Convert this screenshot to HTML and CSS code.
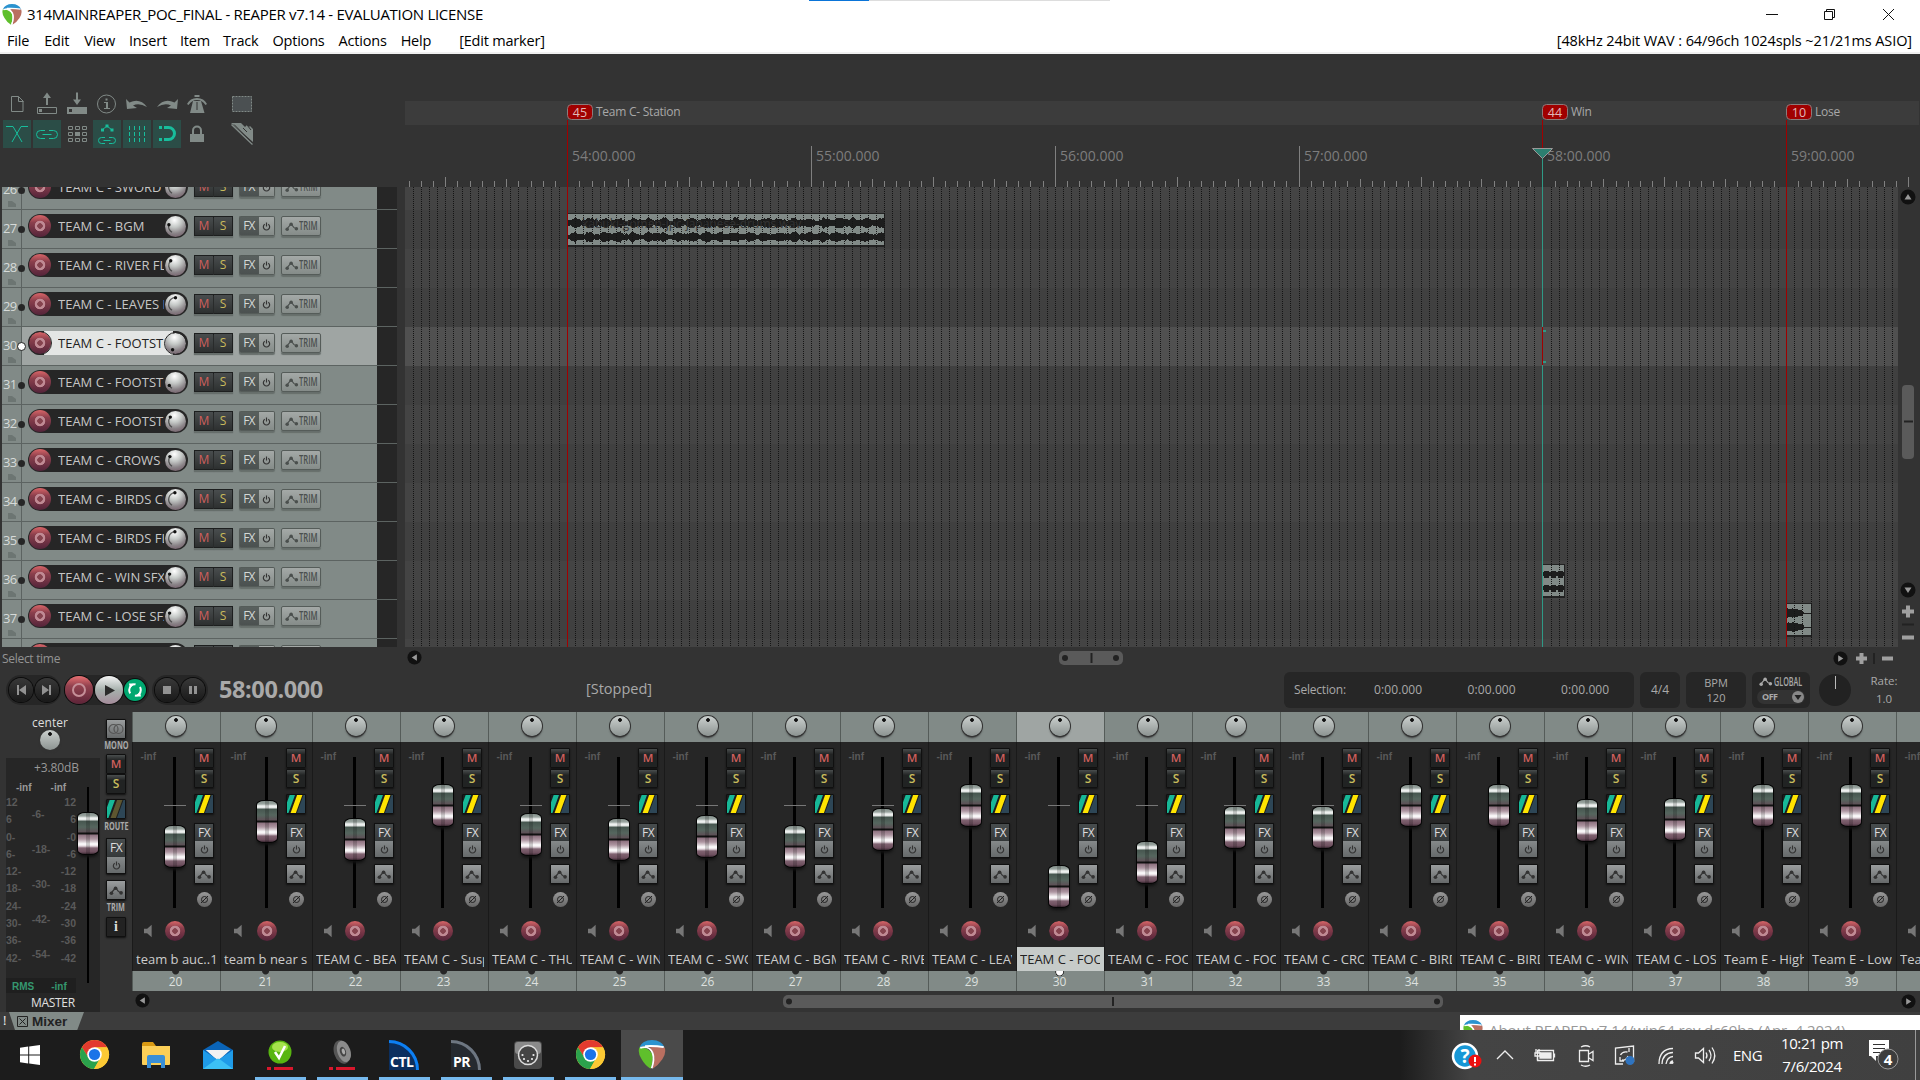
FILE: index.html
```html
<!DOCTYPE html>
<html lang="en">
<head>
<meta charset="utf-8">
<title>314MAINREAPER_POC_FINAL - REAPER</title>
<link rel="stylesheet" href="styles.css">
</head>
<body>
<svg class="defs" width="0" height="0">
  <defs>
    <symbol id="reaper" viewBox="0 0 20 21"><path d="M.8 5.500Q3 0 10 0T19.200 5.500L12 6.500Q6 3 .8 5.500Z" fill="#2b93cf"/><path d="M.8 5.500Q-.5 9.500 2.500 14Q5 18.500 9 20.800Q11.500 14 10 10Q7 5 .8 5.500Z" fill="#5fbf2c"/><path d="M19.200 5.500Q20.500 9.500 17.500 14Q14.500 18.500 10.500 20.800Q12.500 13 11 9Q9.500 6.500 8 5.500Q14 4 19.200 5.500Z" fill="#b96f60"/><path d="M1.500 5.700Q8 3.700 10.500 9.500Q12 14 9.800 20.500M5 4.500Q12 4 18.500 5.200" fill="none" stroke="#fff" stroke-width="1.300"/></symbol>
    <symbol id="chrome" viewBox="0 0 32 32"><circle cx="16" cy="16" r="15" fill="#fc3"/><path d="M3 8.500A15 15 0 0 1 29 8.500L16 9 9.500 19Z" fill="#e33b2e"/><path d="M3 8.500A15 15 0 0 0 15.500 31L22 19.500H10Z" fill="#2ba24c"/><path d="M29 8.500H16L22 19.500 15.500 31A15 15 0 0 0 29 8.500Z" fill="#fcc934"/><circle cx="16" cy="16" r="7.500" fill="#fff"/><circle cx="16" cy="16" r="5.800" fill="#1a73e8"/></symbol>
    <symbol id="env" viewBox="0 0 16 12"><path d="M2 9L7 3 10 7 13.500 9" fill="none" stroke="currentColor" stroke-width="1.300"/><circle cx="2.500" cy="9" r="2" fill="currentColor"/><circle cx="7" cy="3.500" r="2" fill="currentColor"/><circle cx="13" cy="8.500" r="2" fill="currentColor"/></symbol>
    <symbol id="power" viewBox="0 0 10 10"><path d="M3 2.500A3.500 3.500 0 1 0 7 2.500M5 .5V5" fill="none" stroke="currentColor" stroke-width="1.300"/></symbol>
    <symbol id="speaker" viewBox="0 0 10 14"><path d="M0 4.500H3.500L8.500 0V14L3.500 9.500H0Z" fill="#777"/></symbol>
    <symbol id="up" viewBox="0 0 16 16"><circle cx="8" cy="8" r="7.500" fill="#111"/><path d="M4.500 10.500L8 5 11.500 10.500Z" fill="#999"/></symbol>
  </defs>
</svg>

<div class="titlebar">
  <svg class="logo" width="20" height="21"><use href="#reaper"/></svg>
  <span class="title">314MAINREAPER_POC_FINAL - REAPER v7.14 - EVALUATION LICENSE</span>
  <span class="topline"><i></i></span>
  <svg class="winbtns" width="140" height="28" viewBox="0 0 140 28" fill="none" stroke="#111"><path d="M6 14.500h12M64.500 11.500h8v8h-8zM66.500 11v-1.500h8v8h-1.500M123 9l11 11M134 9l-11 11"/></svg>
</div>
<div class="menubar">
  <span>File</span><span class="wide-gap">Edit</span><span class="wide-gap">View</span><span>Insert</span><span class="tight">Item</span><span class="tight">Track</span><span>Options</span><span>Actions</span><span>Help</span><span class="lastact">[Edit marker]</span>
  <span class="audio">[48kHz 24bit WAV : 64/96ch 1024spls ~21/21ms ASIO]</span>
</div>

<div class="upper">
  <div class="toolbar">
    <svg viewBox="0 0 28 28"><path d="M8.500 6.500h7l4.500 4.500v10.500H8.500zM15.500 6.500v5h5"/></svg>
    <svg viewBox="0 0 28 28"><path d="M4.500 17.500h19v6h-19z"/><path class="f" d="M6 19h3v3H6zM14 2.500l4 5.500h-3v7h-2v-7h-3z"/></svg>
    <svg viewBox="0 0 28 28"><path class="f" fill-rule="evenodd" d="M4 17h20v7H4zM6 19v3h3v-3zM14 15l4-5.500h-3v-7h-2v7h-3z"/></svg>
    <svg viewBox="0 0 28 28"><circle cx="13.500" cy="14" r="9"/><path class="f" d="M12.500 8.500h2v2h-2zM11 12h4v6h2v1h-6v-1h2v-5h-2z"/></svg>
    <svg viewBox="0 0 28 28"><path class="f" d="M3 9l1 10 10-1-4-2.500Q16 12.500 24 17 17 7.500 6.500 12.500z"/></svg>
    <svg viewBox="0 0 28 28"><path class="f" d="M25 9l-1 10-10-1 4-2.500Q12 12.500 4 17 11 7.500 21.500 12.500z"/></svg>
    <svg viewBox="0 0 28 28"><path class="f" d="M11.500 5h5v2h-5zM10 11h8l3.500 12H7zM4 14Q7 8 14 8T24 14L22.500 15Q19 10 14 10T5.500 15z"/><path class="k" d="M14 12v8"/></svg>
    <svg class="far" viewBox="0 0 28 28"><path d="M4.500 6.500h19v15h-19z" stroke-dasharray="2 1" fill="#4b5052"/></svg>
    <svg class="on" viewBox="0 0 28 28"><path d="M3 6.500h7L19 22M25 6.500h-7L9 22"/></svg>
    <svg class="on" viewBox="0 0 28 28"><path d="M12 10.500H7.500a4 4 0 0 0 0 8H12M16 10.500h4.500a4 4 0 0 1 0 8H16M9.500 14.500h9"/></svg>
    <svg viewBox="0 0 28 28"><path d="M5.500 6.500h4v3h-4zM12.500 6.500h4v3h-4zM19.500 6.500h4v3h-4zM5.500 12.500h4v3h-4zM19.500 12.500h4v3h-4zM5.500 18.500h4v3h-4zM12.500 18.500h4v3h-4zM19.500 18.500h4v3h-4z"/><path class="f" d="M12 12h5v4h-5z"/></svg>
    <svg class="on" viewBox="0 0 28 28"><path d="M9 10l5-4 5 4M12 17.500H8.500a3 3 0 0 0 0 6H12M16 17.500h3.500a3 3 0 0 1 0 6H16M10.500 20.500h7"/><path class="f" d="M12.500 4.500h3v3h-3zM8 8.500h3v3H8zM17.500 8.500h3v3h-3z"/></svg>
    <svg class="on" viewBox="0 0 28 28"><path d="M6.500 6v17M11.500 6v17M16.500 6v17M21.500 6v17" stroke-dasharray="4 2"/></svg>
    <svg class="on" viewBox="0 0 28 28"><path class="f" d="M6 6h3v3H6zM6 18h3v3H6z"/><path d="M11 7.500h4.500a6 6 0 0 1 0 12H11" stroke-width="3"/></svg>
    <svg viewBox="0 0 28 28"><path class="f" d="M7 14h14v8H7z"/><path d="M10 14v-3.500a4 4 0 0 1 8 0V14" stroke-width="2"/></svg>
    <svg class="far" viewBox="0 0 28 28"><path class="f" d="M3 3h10l4 4 2-2 2 2 1-1 3 3v13z"/><path d="M3.500 4.500l21 20" stroke-width="1.500"/><path class="k" d="M6 4.500L25 23.500M15 8l4 4M19 5l4 5"/></svg>
  </div>
  <div class="ruler" id="ruler"></div>
</div>

<div class="tracks">
  <div class="tcp" id="tcp"></div>
  <div class="arrange" id="arrange"></div>
  <div class="vscroll">
    <svg width="22" height="460" viewBox="0 0 22 460"><use href="#up" x="2" y="2" width="16" height="16"/><rect x="4" y="198" width="12" height="74" rx="4" fill="#5a5a5a"/><path d="M6 234.500h9" stroke="#222" stroke-width="2"/><g transform="rotate(180 10 403)"><use href="#up" x="2" y="395" width="16" height="16"/></g><path d="M4 424.500h12M10 418.500v12M4 450.500h12" stroke="#a0a0a0" stroke-width="4"/><path d="M4 437.500h12" stroke="#222" stroke-width="2"/></svg>
  </div>
</div>

<div class="hscroll">
  <span class="status">Select time</span>
  <svg width="1515" height="22" viewBox="0 0 1515 22"><g transform="rotate(-90 10 11)"><use href="#up" x="3" y="3" width="15" height="15"/></g><rect x="654" y="4" width="64" height="14" rx="5" fill="#5a5a5a"/><circle cx="660" cy="11" r="3" fill="#222"/><circle cx="711" cy="11" r="3" fill="#222"/><path d="M686.500 6v10" stroke="#222" stroke-width="2"/><g transform="rotate(90 1435 11)"><use href="#up" x="1428" y="3" width="15" height="15"/></g><path d="M1451 11.500h11M1456.500 6v11M1477 11.500h11" stroke="#a0a0a0" stroke-width="4"/><path d="M1469 6v11" stroke="#222" stroke-width="2"/></svg>
</div>

<div class="transport">
  <div class="pill p1"><b class="tb"><svg viewBox="0 0 24 24"><path d="M8 7v10h2v-10zM17 7v10l-7-5z"/></svg></b><b class="tb"><svg viewBox="0 0 24 24"><path d="M16 7v10h-2v-10zM7 7v10l7-5z"/></svg></b></div>
  <div class="pill p2"><b class="tb rec"><i></i></b><b class="tb play"><svg viewBox="0 0 28 28"><path d="M10 9v11l10-5.500z"/></svg></b><b class="tb loop"><svg viewBox="0 0 22 22" fill="none" stroke="#fff" stroke-width="2"><circle cx="11" cy="11" r="5.800" stroke-dasharray="13 5.200" stroke-dashoffset="4"/><path d="M5 4.500h5l-4 5zM17 17.500h-5l4-5z" fill="#fff" stroke="none"/></svg></b></div>
  <div class="pill p3"><b class="tb"><svg viewBox="0 0 24 24"><path d="M8 8h8v8H8z"/></svg></b><b class="tb"><svg viewBox="0 0 24 24"><path d="M8 8h3v8H8zM13 8h3v8h-3z"/></svg></b></div>
  <span class="time">58:00.000</span>
  <span class="state">[Stopped]</span>
  <div class="box range"><span>Selection:</span><span>0:00.000</span><span>0:00.000</span><span>0:00.000</span></div>
  <div class="box sig">4/4</div>
  <div class="box bpm"><span>BPM</span><span>120</span></div>
  <div class="box glob"><span class="gl"><svg width="14" height="11"><use href="#env"/></svg><b>GLOBAL</b></span><span class="off">OFF<svg width="12" height="12" viewBox="0 0 12 12"><circle cx="6" cy="6" r="6" fill="#888"/><path d="M2.500 4h7L6 9z" fill="#222"/></svg></span></div>
  <div class="rateknob"></div>
  <div class="rate"><span>Rate:</span><span>1.0</span></div>
</div>

<div class="mixer">
  <div class="master">
    <div class="mleft">
      <span class="center">center</span><span class="knob"></span>
      <div class="meter">
        <span class="db">+3.80dB</span>
        <div class="infs"><span>-inf</span><span>-inf</span></div>
        <div class="scales">
          <div class="sc"><span>12</span><span>6</span><span>0-</span><span>6-</span><span>12-</span><span>18-</span><span>24-</span><span>30-</span><span>36-</span><span>42-</span></div>
          <div class="sc mid"><span>-6-</span><span>-18-</span><span>-30-</span><span>-42-</span><span>-54-</span></div>
          <div class="sc right"><span>12</span><span>6</span><span>-0</span><span>-6</span><span>-12</span><span>-18</span><span>-24</span><span>-30</span><span>-36</span><span>-42</span></div>
        </div>
        <div class="rms"><span>RMS</span><span>-inf</span></div>
        <div class="mname">MASTER</div>
        <div class="mfader"><i class="cap"></i></div>
      </div>
    </div>
    <div class="mright">
      <span class="sq light"><svg width="16" height="12" viewBox="0 0 16 12" fill="none" stroke="#555" stroke-width="1.200"><circle cx="5.500" cy="6" r="4.500"/><circle cx="10.500" cy="6" r="4.500"/></svg></span><em>MONO</em>
      <span class="sq mute">M</span><span class="sq solo">S</span>
      <span class="sq route dim"></span><em class="rt">ROUTE</em>
      <span class="sq fx">FX</span><span class="sq pw"><svg width="9" height="9"><use href="#power"/></svg></span>
      <span class="sq light envb"><svg width="15" height="11"><use href="#env"/></svg></span><em class="tm">TRIM</em>
      <span class="sq info">i</span>
    </div>
  </div>
  <div class="mixmain">
    <div class="strips" id="strips"></div>
    <svg width="1788" height="21" viewBox="0 0 1788 21"><g transform="rotate(-90 10 10)"><use href="#up" x="3" y="3" width="15" height="15"/></g><rect x="651" y="4" width="660" height="13" rx="5" fill="#5a5a5a"/><circle cx="657" cy="10.500" r="3" fill="#222"/><circle cx="1305" cy="10.500" r="3" fill="#222"/><path d="M981 6v9" stroke="#222" stroke-width="2"/><g transform="rotate(90 1777 10)"><use href="#up" x="1770" y="3" width="15" height="15"/></g></svg>
  </div>
</div>

<div class="tabbar"><span class="bang">!</span><span class="tab"><svg width="11" height="11" viewBox="0 0 11 11" fill="none" stroke="#222"><path d="M.5.5h10v10H.5zM2.500 2.500l6 6M8.500 2.500l-6 6"/></svg>Mixer</span>
  <div class="about"><svg width="20" height="21"><use href="#reaper"/></svg><span>About REAPER v7.14/win64 rev dc69ba (Apr&nbsp; 4 2024)</span></div>
</div>

<div class="taskbar">
  <span class="app"><svg width="20" height="20" viewBox="0 0 20 20"><path d="M0 2.700l8.200-1.100V9.500H0zM9.200 1.500L20 0v9.500H9.200zM0 10.500h8.200v7.900L0 17.300zM9.200 10.500H20V20L9.200 18.500z" fill="#fff"/></svg></span>
  <span class="app"><svg width="31" height="31"><use href="#chrome"/></svg></span>
  <span class="app"><svg width="28" height="26" viewBox="0 0 28 26"><path d="M0 2q0-2 2-2h9l3 4H0z" fill="#d99a13"/><path d="M0 4h28v18q0 1-1 1H1q-1 0-1-1z" fill="#fccf57"/><path d="M5 26V15q0-2 2-2h14q2 0 2 2v11h-4v-5H9v5z" fill="#3a8fd6"/></svg></span>
  <span class="app"><svg width="30" height="28" viewBox="0 0 30 28"><path d="M0 9L15 0l15 9v8H0z" fill="#0a64b8"/><path d="M3 9h24L15 20z" fill="#f2f2f2"/><path d="M0 9l15 10L30 9v19H0z" fill="#1f9be8"/><path d="M0 28L15 17 30 28z" fill="#3cc0f5"/><path d="M3 9h24L15 18z" fill="#f2f2f2"/></svg></span>
  <span class="app run"><svg width="26" height="30" viewBox="0 0 26 30"><circle cx="13" cy="12" r="11.500" fill="#58b510"/><ellipse cx="13" cy="7" rx="8" ry="5" fill="#a5e34c"/><path d="M8 12l4 6 6-12" fill="none" stroke="#fff" stroke-width="2.500"/><path d="M0 27h4v3H0zM7 27h19v3H7z" fill="#d8172c"/></svg></span>
  <span class="app run"><svg width="26" height="30" viewBox="0 0 26 30"><g transform="rotate(-18 13 12)"><ellipse cx="13" cy="12" rx="8" ry="12" fill="#555"/><ellipse cx="15" cy="12" rx="6.500" ry="11" fill="#8b8b8b"/><ellipse cx="14" cy="12" rx="3" ry="5" fill="#444"/><ellipse cx="14.500" cy="12" rx="1.600" ry="3" fill="#aaa"/></g><path d="M0 27h4v3H0zM7 27h19v3H7z" fill="#d8172c"/></svg></span>
  <span class="app run"><svg width="32" height="30" viewBox="0 0 32 30"><path d="M1 0A30 30 0 0 1 31 30H1z" fill="#0b2f5f"/><path d="M1 1.500A28.500 28.500 0 0 1 29.500 30" fill="none" stroke="#0d7ff2" stroke-width="3"/><text x="2" y="27" class="ico">CTL</text></svg></span>
  <span class="app run"><svg width="32" height="30" viewBox="0 0 32 30"><path d="M1 0A30 30 0 0 1 31 30H1z" fill="#252a30"/><path d="M1 1.500A28.500 28.500 0 0 1 29.500 30" fill="none" stroke="#6d7681" stroke-width="3"/><text x="3" y="27" class="ico">PR</text></svg></span>
  <span class="app run"><svg width="28" height="28" viewBox="0 0 28 28"><rect width="28" height="28" rx="4" fill="#4a4a4a"/><rect x="1" y="1" width="26" height="12" rx="3" fill="#8a8a8a"/><circle cx="14" cy="14" r="9.500" fill="#444" stroke="#ddd" stroke-width="1.500"/><g fill="#eee"><circle cx="8.500" cy="14" r="1.100"/><circle cx="19.500" cy="14" r="1.100"/><circle cx="10" cy="18" r="1.100"/><circle cx="18" cy="18" r="1.100"/><circle cx="14" cy="20" r="1.100"/></g></svg></span>
  <span class="app run"><svg width="31" height="31"><use href="#chrome"/></svg></span>
  <span class="app run active"><svg width="28" height="29"><use href="#reaper"/></svg></span>
  <div class="tray">
    <svg width="310" height="50" viewBox="0 0 310 50" fill="none" stroke="#eee" stroke-width="1.300">
      <circle cx="15" cy="26" r="12" fill="#1797d6" stroke="#fff" stroke-width="2.500"/><text x="15" y="33" class="q">?</text><circle cx="25" cy="31" r="6.500" fill="#ec1010" stroke="none"/><path d="M25 27v5M25 33.500v2" stroke="#fff" stroke-width="2"/>
      <path d="M47 29l8-8 8 8"/>
      <path d="M87.500 20.500h16v10h-16z"/><path d="M90 23h11v5H90z" fill="#eee"/><path d="M104.500 23.500v4M86 19v4M89 19v4M85 23h5v3h-5zM87.500 26v4"/>
      <path d="M129.500 20.500h9v11h-9zM139 24l4-2.500v9L139 28M131 17q5-2.500 9 0M131 35q5 2.500 9 0"/>
      <path d="M173 34h-7.500V18l18-2v16M170 27v4h4M179 22v-4M170.500 25q2-4 7-3M178 26q-2 5-6 4"/><circle cx="180" cy="30.500" r="4.500" fill="#2f74c0" stroke="none"/>
      <path d="M209 34Q209 19 223 18.500M212 34Q212.500 23 223 22.500M216 34Q217 27 223 26.500M220 34Q220.500 31 223 31" /><circle cx="222" cy="32.500" r="1.500" fill="#eee" stroke="none"/>
      <path d="M245.500 23h3l5-4.500v14l-5-4.500h-3zM256 22.500q2 3 0 6M259 20q4 5.500 0 11M262 17.500q5.500 8 0 16"/>
    </svg>
    <span class="lang">ENG</span>
    <span class="clock">10:21 pm<br>7/6/2024</span>
    <svg class="note" width="32" height="34" viewBox="0 0 32 34"><path d="M1 2h20v16H8v5l-5-5H1z" fill="#fff"/><path d="M5 6.500h12M5 10.500h12M5 14.500h7" stroke="#333"/><circle cx="20" cy="21" r="10" fill="#3d3d3d" stroke="#999"/><text x="20" y="27" class="four">4</text></svg>
    <i class="desk"></i>
  </div>
</div>
<script src="app.js"></script>
</body>
</html>
```
FILE: styles.css
```css
* { box-sizing: border-box; }
body { margin: 0; width: 1920px; height: 1080px; overflow: hidden; background: #333; display: flex; flex-direction: column; font-family: "Open Sans", "Noto Sans", sans-serif; font-size: 13px; line-height: 1; color: #ccc; }
svg { display: block; flex: none; }
.defs { position: absolute; }
i, em { font-style: normal; }

/* window chrome */
.titlebar { height: 28px; flex: none; background: #fff; color: #000; display: flex; align-items: center; padding-left: 2px; position: relative; font-size: 15px; }
.title { margin-left: 5px; letter-spacing: -.3px; white-space: nowrap; }
.topline { position: absolute; left: 809px; top: 0; width: 301px; height: 1px; background: #ddd; }
.topline i { display: block; width: 60px; height: 1px; background: #0a74d8; }
.winbtns { margin-left: auto; margin-right: 20px; }
.menubar { height: 26px; flex: none; background: #fff; border-bottom: 2px solid #f0f0f0; color: #000; display: flex; align-items: center; padding: 3px 8px 0 7px; gap: 14px; font-size: 14.500px; letter-spacing: -.2px; white-space: nowrap; }
.wide-gap { margin-left: 1px; }
.tight { margin-left: -1px; }
.lastact { margin-left: 14px; }
.audio { margin-left: auto; letter-spacing: -.1px; }

/* toolbar and ruler */
.upper { height: 133px; flex: none; display: flex; }
.toolbar { width: 405px; padding: 36px 0 0 3px; display: grid; grid-template-columns: repeat(7, 28px) 45px; grid-auto-rows: 28px; gap: 2px; align-content: start; }
.toolbar svg { width: 28px; height: 28px; fill: none; stroke: #818a87; color: #818a87; }
.toolbar .far { margin-left: 15px; }
.toolbar .f { fill: #818a87; stroke: none; }
.toolbar .k { stroke: #333; }
.toolbar .on { background: #2b4d47; stroke: #18bd9c; }
.toolbar .on .f { fill: #18bd9c; }
.ruler { width: 1515px; }
.lbl { font: 14px "Open Sans"; fill: #7d7d7d; }
.mk { font: 12px "Open Sans"; fill: #a8a8a8; letter-spacing: -.25px; }
.mkn { font: 12.500px "Open Sans"; fill: #e0b8b8; text-anchor: middle; }
.clip { font: 12px "Open Sans"; fill: #333; }

/* track panel */
.tracks { height: 460px; flex: none; display: flex; overflow: hidden; }
.tcp { width: 395px; margin: 0 8px 0 2px; height: 460px; overflow: hidden; }
.row { height: 39px; display: flex; border-top: 1px solid #5c6361; background: linear-gradient(90deg, #818a87 375px, #262626 375px); }
.row:first-child { margin-top: -17px; }
.row.sel { background: linear-gradient(90deg, #818a87 20px, #9fa5a3 20px, #9fa5a3 375px, #262626 375px); }
.num { width: 20px; border-right: 1px solid #5c6361; position: relative; padding: 12px 0 0 1px; font-size: 13px; letter-spacing: -.8px; color: #d6dad8; }
.num::before { content: ""; position: absolute; right: -4px; top: 16px; width: 7px; height: 7px; border-radius: 50%; background: #262626; }
.sel .num::before { background: #fff; outline: 1px solid #333; }
.num::after { content: ""; position: absolute; left: 6px; top: 30px; width: 8px; height: 6px; background: #6c7572; clip-path: polygon(0 0,50% 0,100% 50%,100% 100%,0 100%); }
.plate { width: 160px; height: 24px; margin: 4px 6px 0 6px; border-radius: 12px; background: #262626; display: flex; align-items: center; color: #c6c6c6; padding: 0 1px; }
.sel .plate { background: linear-gradient(90deg, #262626 16px, #e4e6e5 16px, #e4e6e5 145px, #262626 145px); color: #222; }
.arm { width: 22px; height: 22px; border-radius: 50%; background: radial-gradient(circle, #85434e 0 2.500px, #c08a94 3px 5px, transparent 5.600px), linear-gradient(#d96568, #8a3f4c 35%, #54243a); flex: none; }
.nm { width: 106px; margin: 0 1px 0 7px; overflow: hidden; white-space: pre; font-size: 13px; letter-spacing: 0; line-height: 20px; }
.sel .arm { outline: 1px solid #262626; }
.vol { width: 21px; height: 21px; border-radius: 50%; background: radial-gradient(circle at 45% 20%, #fff, #c4c8c6 35%, #8a8488 65%, #6a4c5c); flex: none; }
.sel .vol { outline: 1.500px solid #262626; }
.btn { margin-top: 6px; height: 20px; font-size: 12px; display: flex; align-items: center; justify-content: center; border: 1px solid #1d1f1f; box-shadow: 0 2px 1px #666e6b; }
.m { width: 20px; background: linear-gradient(#494d4e, #2d3030); color: #cf5f5c; }
.s { width: 19px; background: linear-gradient(#494d4e, #2d3030); color: #c9bb5c; border-left: 0; margin-right: 6px; }
.f1 { width: 20px; background: linear-gradient(#59605e, #4b5150); color: #d4d8d6; border-color: #555c59; border-right: 0; border-radius: 2px 0 0 2px; letter-spacing: -.7px; padding-right: 1px; }
.f2 { width: 16px; background: linear-gradient(#a4a9a7, #858c89); color: #333; border-color: #555c59; border-left: 0; border-radius: 0 2px 2px 0; margin-right: 6px; }
.tr { width: 40px; background: linear-gradient(#a4a9a7, #858c89); color: #4a4f4d; border-color: #555c59; border-radius: 2px; gap: 0; }
.tr b { display: inline-block; width: 18px; transform: scaleX(.64); transform-origin: 0 50%; font-size: 12px; font-weight: 600; }
.arrange { width: 1493px; height: 460px; }
.vscroll { width: 22px; }

/* scroll + transport */
.hscroll { height: 22px; flex: none; display: flex; align-items: center; }
.status { width: 405px; padding: 2px 0 0 2px; font-size: 12px; letter-spacing: -.3px; color: #939393; }
.transport { height: 43px; flex: none; display: flex; align-items: center; padding: 0 0 2px 6px; white-space: nowrap; }
.pill { height: 30px; border-radius: 15px; background: #262626; display: flex; align-items: center; gap: 2px; margin-right: 3px; }
.p1 { width: 55px; padding-left: 3px; }
.p2 { width: 85px; padding-left: 1px; gap: 1.500px; }
.p3 { width: 56px; padding-left: 3px; }
.tb { width: 24px; height: 24px; border-radius: 50%; background: linear-gradient(#383838, #191919); box-shadow: 0 0 0 1px #0c0c0c; fill: #929292; display: flex; align-items: center; justify-content: center; flex: none; }
.tb svg { width: 100%; height: 100%; }
.rec { width: 28px; height: 28px; background: linear-gradient(#e87072, #93424f 35%, #5d2438); }
.rec i { width: 14px; height: 14px; border: 2px solid #c58f98; border-radius: 50%; }
.play { width: 28px; height: 28px; background: linear-gradient(#f4f4f4, #a6b0ac 50%, #a58c9b); fill: #2b2b2b; }
.loop { width: 22px; height: 22px; background: #00a870; }
.time { font-size: 23.500px; font-weight: bold; color: #a9a9a9; margin-left: 8px; width: 108px; letter-spacing: -.4px; }
.state { width: 71px; margin-left: 259px; font-size: 14.500px; color: #a9a9a9; }
.box { height: 36px; margin-right: 6px; border-radius: 6px; background: #262626; display: flex; align-items: center; justify-content: center; color: #a9a9a9; font-size: 12px; flex: none; }
.range { width: 350px; margin-left: 627px; justify-content: flex-start; padding-left: 10px; }
.range span { width: 93.500px; flex: none; letter-spacing: .1px; }
.range span:first-child { width: 80px; letter-spacing: -.2px; }
.range span:last-child { width: 60px; }
.sig { width: 40px; }
.bpm { width: 60px; flex-direction: column; gap: 4px; font-size: 11px; }
.glob { width: 58px; flex-direction: column; gap: 3px; }
.gl { display: flex; align-items: center; gap: 1px; font-size: 12px; }
.gl b { width: 29px; font-weight: 600; transform: scaleX(.6); transform-origin: 0 50%; line-height: 11px; }
.off { width: 48px; height: 14px; border-radius: 7px; background: #333; display: flex; align-items: center; justify-content: space-between; padding: 0 1px 0 5px; font-size: 9px; font-weight: bold; letter-spacing: -.5px; }
.rateknob { width: 32px; height: 32px; border-radius: 50%; margin-left: 3px; background: linear-gradient(#bbb, #bbb) 50% 2px / 1px 13px no-repeat, #222; }
.rate { width: 48px; margin-left: 9px; display: flex; flex-direction: column; align-items: center; gap: 6px; font-size: 11.500px; color: #a9a9a9; }

/* mixer */
.mixer { height: 300px; flex: none; display: flex; }
.master { width: 132px; display: flex; padding-left: 6px; }
.mleft { width: 94px; display: flex; flex-direction: column; align-items: center; padding-top: 5px; }
.center { font-size: 12px; height: 13px; margin-right: 6px; color: #ddd; }
.knob { width: 20px; height: 20px; border-radius: 50%; background: radial-gradient(circle at 50% 20%, #111 0 1.500px, transparent 2.200px), linear-gradient(#cbd0ce, #8c9391); box-shadow: 0 0 0 1px #333, 0 2px 2px #333; flex: none; }
.mleft .knob { margin-right: 6px; }
.meter { width: 94px; height: 254px; margin-top: 8px; background: #262626; position: relative; display: flex; flex-direction: column; }
.db { padding: 4px 0 0 28px; font-size: 12px; color: #999; letter-spacing: -.1px; }
.infs { display: flex; gap: 19px; padding: 8px 0 0 10px; font: bold 10px "Liberation Sans"; color: #999; }
.scales { display: flex; width: 70px; justify-content: space-between; font: bold 10.500px "Liberation Sans"; color: #5a5a5a; padding-top: 3px; }
.sc { display: flex; flex-direction: column; }
.sc span { height: 17.300px; flex: none; line-height: 13px; }
.sc.mid { padding-top: 12px; }
.sc.mid span { height: 35px; }
.right { text-align: right; }
.rms { position: absolute; left: 0; top: 220px; width: 70px; height: 15px; display: flex; gap: 17px; padding: 1px 0 0 6px; align-items: center; background: #1f1f1f; font: bold 10px "Liberation Sans"; color: #35976f; }
.mname { position: absolute; left: 25px; top: 235px; line-height: 20px; font-size: 12px; letter-spacing: -.3px; color: #e0e0e0; }
.mfader { position: absolute; left: 81px; top: 29px; width: 2px; height: 196px; background: #000; }
.mfader .cap { position: absolute; left: -9px; top: 26px; }
.cap { display: block; width: 20px; height: 41px; border-radius: 7px 7px 7px 7px / 4px; box-shadow: 0 0 0 1px #050505, 0 3px 3px #111; background: linear-gradient(90deg, transparent 8px, rgba(0,0,0,.18) 8px 12px, transparent 12px), linear-gradient(#85918c 0, #9aa5a0 3px, #f2f4f3 5px, #dfe3e1 7px, #46564f 8px, #55665e 14px, #5d5157 19px, #111 20px, #111 21px, #8e7280 22px, #ad96a1 26px, #fff 31px, #e7dde2 33px, #806371 35px, #6d4f5e 39px, #392731 41px); }
.mright { width: 20px; margin-left: 6px; padding-top: 7px; display: flex; flex-direction: column; align-items: center; }
.mright em { font: bold 11px "Open Sans"; color: #aaa; transform: scaleX(.66); height: 12px; line-height: 12px; margin: 0 0 3px; }
.mright .rt { margin: 1px 0 6px; }
.mright .tm { margin: 1px 0 4px; }
.sq { width: 20px; height: 20px; flex: none; display: flex; align-items: center; justify-content: center; font-size: 12px; border: 1px solid #101010; border-radius: 1px; background: linear-gradient(#4a4e4e, #212323 30%); box-shadow: 0 1px 2px #111; }
.mute { color: #cf5f5c; font-weight: 600; font-size: 11.500px; }
.solo { color: #c9bb5c; font-weight: 600; }
.fx { background: linear-gradient(#484d4e, #35393a); letter-spacing: -.5px; color: #ddd; border-bottom: 0; height: 19px; }
.pw { height: 17px; background: linear-gradient(#85898a, #666a6b); color: #333; border-top: 0; }
.light { background: linear-gradient(#9a9d9e, #66696a); color: #333; }
.route { background: linear-gradient(110deg, #1b1d1e 2px, #17b897 3px 7px, #1b1d1e 8px 9px, #ffe400 10px 14px, #1b1d1e 15px, #2d4656 16px); }
.route.dim { background: linear-gradient(110deg, #1b1d1e 2px, #17b897 3px 7px, #1b1d1e 8px 9px, #5d5630 10px 14px, #1b1d1e 15px, #2d4656 16px); }
.mright .pw { margin-bottom: 6px; }
.mright .solo { margin-bottom: 5px; }
.info { font: bold 14px "Liberation Serif"; color: #ddd; background: #222; }
.mixmain { width: 1788px; }
.strips { display: flex; height: 279px; overflow: hidden; }
.strip { width: 88px; flex: none; border-left: 1px solid #1a1a1a; background: #262626; display: flex; flex-direction: column; }
.strip.wide { width: 92px; }
.shead { height: 30px; flex: none; background: #818a87; display: flex; justify-content: center; padding: 4px 2px 0 0; margin-left: -1px; border-left: 1px solid #555c59; }
.strip.sel .shead { background: #9fa5a3; }
.sbody { height: 167px; display: flex; padding: 6px 0 0 7.500px; }
.sinf { width: 23px; padding-top: 3px; font: bold 10px "Liberation Sans"; color: #5a5a5a; }
.track { width: 22px; height: 151px; margin-top: 9px; background: linear-gradient(#777, #777) 0 48px / 22px 1px no-repeat, linear-gradient(#000, #000) 50% 0 / 3px 151px no-repeat; }
.track .cap { margin: 0 1px; position: relative; }
.scol { width: 20px; margin-left: 8.500px; display: flex; flex-direction: column; align-items: center; }
.wide .sbody { padding-left: 9.500px; }
.wide .sinf { width: 25px; }
.wide .scol { margin-left: 8.500px; }
.scol .sq { margin-bottom: 1px; }
.scol .solo { margin-bottom: 6px; height: 19px; }
.scol .mute { height: 20px; }
.scol .route { margin-bottom: 9px; }
.scol .fx { margin-bottom: 0; height: 18px; }
.scol .pw { margin-bottom: 6px; }
.scol .envb { margin-bottom: 8px; }
.ph { width: 15px; height: 15px; border-radius: 50%; background: linear-gradient(#999, #666); display: flex; }
.sarm { height: 42px; display: flex; align-items: center; padding: 2px 0 0 11px; }
.sarm .arm { width: 20px; height: 20px; margin-left: 12px; }
.wide .sarm { padding-left: 13px; }
.wide .arm { margin-left: 14px; }
.sname { height: 20px; line-height: 16px; padding-left: 3px; overflow: hidden; white-space: pre; font-size: 13px; letter-spacing: 0; color: #ccc; }
.sname span { display: block; width: 80px; overflow: hidden; }
.wide .sname span { width: 84px; }
.strip.sel .sname { background: #c6cbc9; color: #222; height: 24px; margin-top: -4px; padding-top: 4px; }
.snum { height: 20px; background: #818a87; margin-left: -1px; border-left: 1px solid #555c59; text-align: center; line-height: 21px; font-size: 12px; padding-right: 2px; color: #dde0df; background-image: radial-gradient(circle at 49% 0, #262626 3px, transparent 4px); }
.strip.sel .snum { background-image: radial-gradient(circle at 49% 1px, #fff 3px, #262626 4px, transparent 4.500px); }

/* docker tabs */
.tabbar { height: 18px; flex: none; background: #3c3c3c; display: flex; }
.bang { width: 9px; padding-left: 3px; font-size: 13px; line-height: 16px; color: #eee; }
.tab { width: 75px; height: 18px; background: #818a87; clip-path: polygon(0 0, 100% 0, 91% 100%, 8% 100%); display: flex; align-items: center; gap: 4px; padding-left: 8px; font: bold 13.500px "Liberation Sans"; color: #222; }
.about { margin-left: auto; width: 460px; height: 15px; margin-top: 3px; background: #fff; overflow: hidden; color: #999; display: flex; gap: 6px; padding: 5px 0 0 3px; font-size: 15px; white-space: nowrap; letter-spacing: -.1px; }
.about span { padding-top: 3px; }

/* taskbar */
.taskbar { height: 50px; flex: none; background: linear-gradient(90deg, #1c1c1c 0 1400px, #444 1470px, #404040); display: flex; }
.app { width: 62px; display: flex; align-items: center; justify-content: center; border-bottom: 3px solid transparent; padding-top: 2px; }
.app:first-child { width: 63px; padding-right: 3px; }
.app.run { background: linear-gradient(#76b9ed, #76b9ed) 50% 100% / 51px 3px no-repeat border-box; }
.app.active { background: linear-gradient(#76b9ed, #76b9ed) 50% 100% / 62px 3px no-repeat border-box, #4a4a4a border-box; }
.ico { font: bold 14px "Open Sans"; fill: #fff; letter-spacing: -.5px; }
.tray { margin-left: auto; width: 470px; display: flex; align-items: center; color: #fff; font-size: 15px; }
.q { font: bold 19px "Open Sans"; fill: #fff; stroke: none; text-anchor: middle; }
.lang { width: 32px; margin-left: -27px; letter-spacing: -.5px; }
.clock { width: 90px; margin-left: 2px; text-align: center; line-height: 23px; letter-spacing: -.4px; }
.note { margin-left: 11px; }
.four { font: bold 15px "Open Sans"; fill: #fff; text-anchor: middle; }
.desk { width: 1px; height: 50px; background: #999; margin-left: 15px; }
```
FILE: app.js
```js
const MIN = 243.8, X54 = 162.2;          // pixels per minute, position of 54:00 in the lane
const NAMES = {26:'SWORD',27:'BGM',28:'RIVER FLOW',29:'LEAVES RUSTLE',30:'FOOTSTEPS 1',31:'FOOTSTEPS 2',32:'FOOTSTEPS 3',33:'CROWS',34:'BIRDS CHIRP',35:'BIRDS FLY',36:'WIN SFX',37:'LOSE SFX',38:''};
const ANGLES = {26:-60,27:-75,28:-45,29:0,30:-155,31:-115,32:-50,33:-55,34:-5,35:-5,36:-60,37:-60,38:0};

let seed = 7;
const rnd = () => (seed = (seed * 16807) % 2147483647) / 2147483647;

// ruler
(() => {
  let s = '<svg width="1515" height="133" viewBox="0 0 1515 133"><rect y="47" width="1514" height="24" fill="#3c3c3c"/>';
  for (let i = -14; i < 112; i++) {
    const x = Math.round(X54 + i * MIN / 20);
    if (x < 0) continue;
    const h = i % 20 === 0 ? 41 : i % 10 === 0 ? 10 : i % 5 === 0 ? 8 : 6;
    s += `<rect x="${x}" y="${133 - h}" width="1" height="${h}" fill="#808080"/>`;
    if (i % 20 === 0) s += `<text class="lbl" x="${x + 5}" y="107">${54 + i / 20}:00.000</text>`;
  }
  for (const [x, n, t, w] of [[162, 45, 'Team C- Station', 25], [1137, 44, 'Win', 25], [1381, 10, 'Lose', 25]]) {
    s += `<rect x="${x}" y="66" width="1" height="67" fill="#a00000"/><rect x="${x + .5}" y="50.500" width="${w}" height="15" rx="4" fill="#a00000" stroke="#8c7b7b"/><text class="mkn" x="${x + 13}" y="62.500">${n}</text><text class="mk" x="${x + 29}" y="62">${t}</text>`;
  }
  s += '<rect x="1137" y="94" width="1" height="39" fill="#2f9a86"/><path d="M1127.500 94.500h20l-10 10z" fill="#2c7f70" stroke="#999"/></svg>';
  document.getElementById('ruler').innerHTML = s;
})();

// arrange view
function wave(x, y, w, h, amp) {
  let top = '', bot = '';
  for (let i = 0; i <= w; i++) {
    const a = amp(i / w);
    top += `${x + i},${(y - a * h).toFixed(1)} `;
    bot = `${x + i},${(y + a * h).toFixed(1)} ` + bot;
  }
  return `<polygon points="${top}${bot}" fill="#1d1d1d"/>`;
}
(() => {
  let s = '<svg width="1493" height="460" viewBox="0 0 1493 460" shape-rendering="crispEdges">';
  for (let r = 26; r < 39; r++) s += `<rect y="${(r - 26) * 39 - 16}" width="1493" height="39" fill="${r === 30 ? '#505050' : r % 2 ? '#404040' : '#444'}"/>`;
  const item = (x, y, w, amp) => `<rect x="${x}" y="${y}" width="${w}" height="34" fill="#222"/><rect x="${x}" y="${y + 1}" width="${w - 1}" height="31" fill="#818a87"/>` + wave(x, y + 10, w - 1, 7, amp) + wave(x, y + 24, w - 1, 7, amp);
  s += item(163, 26, 317, t => .3 + Math.pow(rnd(), 2) * .35 + .25 * Math.pow(Math.abs(Math.sin(t * 68)), 3)) + '<text class="clip" x="177" y="41">kabuki-gomen-jpc-japanese-drums.wav</text>';
  s += item(1138, 377, 22, t => (t * 3) % 1 < .12 ? .2 : .5);
  s += item(1381, 416, 26, t => t < .7 ? .5 + rnd() * .2 - Math.max(0, t - .4) : .07);
  let d = '';
  for (let i = -19; i < 165; i++) {
    const x = Math.round(X54 + i * MIN / 30);
    if (x >= 0 && x < 1493) d += `M${x + .5} 0V460`;
  }
  s += `<path d="${d}" stroke="#141414" stroke-dasharray="1 1"/>`;
  s += '<path d="M162.500 0V460M1381.500 0V460M1137.500 140V178" stroke="#a00000"/><path d="M1137.500 0V140M1137.500 178V460" stroke="#2f9a86"/><path d="M1138 143h3v2h-3zM1138 174h3v2h-3z" fill="#2f9a86"/></svg>';
  document.getElementById('arrange').innerHTML = s;
})();

// track control panel
document.getElementById('tcp').innerHTML = Object.keys(NAMES).map(n => {
  const a = ANGLES[n] * Math.PI / 180, p = t => [(10.5 + 6.8 * Math.sin(t)).toFixed(1), (10.5 - 6.8 * Math.cos(t)).toFixed(1)];
  const from = -2.6, [x0, y0] = p(from), [x1, y1] = p(a);
  return `<div class="row${n === '30' ? ' sel' : ''}"><div class="num">${n === '38' ? '' : n}</div><div class="plate"><i class="arm"></i><span class="nm">TEAM C - ${NAMES[n]}</span><i class="vol"><svg width="21" height="21"><path d="M${x0} ${y0}A6.800 6.800 0 0 1 ${x1} ${y1}" fill="none" stroke="#333" stroke-opacity=".75" stroke-width="1.300"/><circle cx="${x1}" cy="${y1}" r="1.700" fill="#111"/></svg></i></div><div class="btn m">M</div><div class="btn s">S</div><div class="btn f1">FX</div><div class="btn f2"><svg width="9" height="9"><use href="#power"/></svg></div><div class="btn tr"><svg width="14" height="11"><use href="#env"/></svg><b>TRIM</b></div></div>`;
}).join('');

// mixer strips: number, label, centre of the fader cap
const STRIPS = [[20,'team b auc..1',846],[21,'team b near s',821],[22,'TEAM C - BEA',839],[23,'TEAM C - Susp',805],[24,'TEAM C - THU',834],[25,'TEAM C - WIN',839],[26,'TEAM C - SWO',836],[27,'TEAM C - BGM',846],[28,'TEAM C - RIVER',829],[29,'TEAM C - LEAV',805],[30,'TEAM C - FOOT',886],[31,'TEAM C - FOOT',862],[32,'TEAM C - FOOT',827],[33,'TEAM C - CROW',827],[34,'TEAM C - BIRD',805],[35,'TEAM C - BIRD',805],[36,'TEAM C - WIN',820],[37,'TEAM C - LOSE',819],[38,'Team E - High',805],[39,'Team E - Low',805],[40,'Team E',805]];
document.getElementById('strips').innerHTML = STRIPS.map(([n, t, y]) => `<div class="strip${n === 21 ? ' wide' : ''}${n === 30 ? ' sel' : ''}"><div class="shead"><i class="knob"></i></div><div class="sbody"><span class="sinf">-inf</span><div class="track"><i class="cap" style="top:${y - 777.5}px"></i></div><div class="scol"><span class="sq mute">M</span><span class="sq solo">S</span><span class="sq route"></span><span class="sq fx">FX</span><span class="sq pw"><svg width="9" height="9"><use href="#power"/></svg></span><span class="sq light envb"><svg width="15" height="11"><use href="#env"/></svg></span><i class="ph"><svg width="15" height="15" viewBox="0 0 15 15" fill="none" stroke="#222"><circle cx="7.500" cy="7.500" r="3"/><path d="M4 11l7-7"/></svg></i></div></div><div class="sarm"><svg width="9" height="14"><use href="#speaker"/></svg><i class="arm"></i></div><div class="sname"><span>${t}</span></div><div class="snum">${n}</div></div>`).join('');
```
